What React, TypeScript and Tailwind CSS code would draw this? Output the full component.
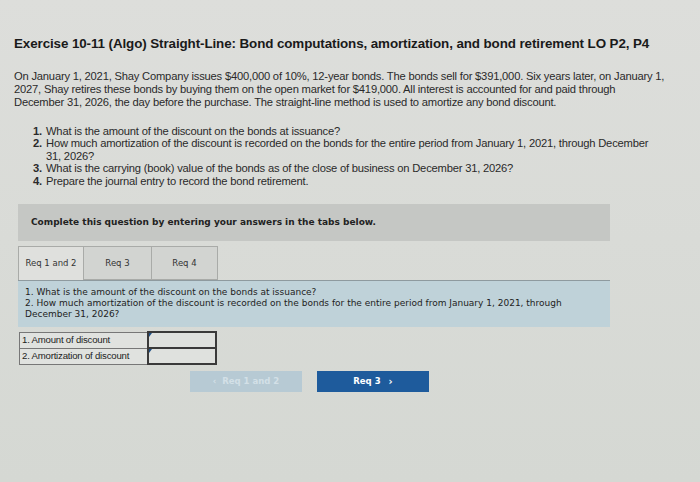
import React from 'react'

const questions = [
  { n: '1.', lines: ['What is the amount of the discount on the bonds at issuance?'] },
  {
    n: '2.',
    lines: [
      'How much amortization of the discount is recorded on the bonds for the entire period from January 1, 2021, through December',
      '31, 2026?',
    ],
  },
  { n: '3.', lines: ['What is the carrying (book) value of the bonds as of the close of business on December 31, 2026?'] },
  { n: '4.', lines: ['Prepare the journal entry to record the bond retirement.'] },
]

const tabs = [
  { label: 'Req 1 and 2', width: 'w-[66px]', active: true },
  { label: 'Req 3', width: 'w-[68px]', active: false },
  { label: 'Req 4', width: 'w-[66px]', active: false },
]

export default function App() {
  return (
    <div className="w-[700px] h-[482px] overflow-hidden bg-gradient-to-b from-[#dddedb] to-[#d5d8d3] pt-[36px] pl-[14px] pr-[10px] font-['Liberation_Sans',Arial,sans-serif] text-[#1e1e1e]">
      {/* Title */}
      <h1 className="text-[13.4px] leading-[16px] font-bold tracking-[-0.1px] text-[#1a1a1a] whitespace-nowrap">
        Exercise 10-11 (Algo) Straight-Line: Bond computations, amortization, and bond retirement LO P2, P4
      </h1>

      {/* Problem text */}
      <p className="mt-[18px] text-[11.2px] leading-[13px] tracking-[-0.2px] text-[#2a2a2a] whitespace-nowrap">
        On January 1, 2021, Shay Company issues $400,000 of 10%, 12-year bonds. The bonds sell for $391,000. Six years later, on January 1,
        <br />
        2027, Shay retires these bonds by buying them on the open market for $419,000. All interest is accounted for and paid through
        <br />
        December 31, 2026, the day before the purchase. The straight-line method is used to amortize any bond discount.
      </p>

      <ol className="mt-[16px] ml-[19px] text-[11.2px] leading-[12.4px] tracking-[-0.2px] text-[#2a2a2a] whitespace-nowrap">
        {questions.map(q => (
          <li key={q.n} className="flex">
            <span className="w-[13px] shrink-0 font-bold">{q.n}</span>
            <span>
              {q.lines.map((l, i) => (
                <span key={i} className="block">
                  {l}
                </span>
              ))}
            </span>
          </li>
        ))}
      </ol>

      <div className="ml-[4px] w-[592px] mt-[17px] font-['DejaVu_Sans',Verdana,sans-serif]">
        {/* Instruction bar */}
        <div className="h-[37px] bg-[#c5c7c4] flex items-center pl-[13px]">
          <span className="text-[9px] font-bold text-[#222]">
            Complete this question by entering your answers in the tabs below.
          </span>
        </div>

        {/* Tabs */}
        <div className="mt-[5px] flex h-[34px]">
          {tabs.map(t => (
            <div
              key={t.label}
              className={`${t.width} h-full flex items-center justify-center border border-[#a9aba8] text-[8.5px] text-[#333] ${
                t.active ? 'bg-[#dfe0dd] border-b-0' : 'bg-[#d2d4d1] border-l-0'
              }`}
            >
              {t.label}
            </div>
          ))}
        </div>

        {/* Question panel */}
        <div className="h-[47px] bg-[#bfd2d9] border-t border-[#8e9a9f] pt-[6px] pl-[7px] text-[9px] leading-[11px] text-[#222] whitespace-nowrap">
          <p>1. What is the amount of the discount on the bonds at issuance?</p>
          <p>
            2. How much amortization of the discount is recorded on the bonds for the entire period from January 1, 2021, through
            <br />
            December 31, 2026?
          </p>
        </div>

        {/* Answer table */}
        <table className="mt-[4px] ml-[1px] border-collapse font-['Liberation_Sans',Arial,sans-serif] text-[9.6px] tracking-[-0.2px] text-[#222]">
          <tbody>
            {['1. Amount of discount', '2. Amortization of discount'].map(label => (
              <tr key={label} className="h-[16px]">
                <td className="w-[128px] border border-[#777] bg-[#e0e2df] pl-[2px] leading-none whitespace-nowrap">{label}</td>
                <td className="w-[68px] border-2 border-[#3a3a3a] bg-[#dfe1de] p-0 relative">
                  <span className="absolute left-0 top-0 w-0 h-0 border-t-[4px] border-t-[#1f4f85] border-r-[3px] border-r-transparent" />
                </td>
              </tr>
            ))}
          </tbody>
        </table>

        {/* Navigation */}
        <div className="mt-[6px] ml-[172px] flex gap-[15px]">
          <button className="w-[112px] h-[21px] bg-[#b7cad4] text-[#d3e0e7] text-[8.5px] font-bold flex items-center justify-center gap-[6px]">
            <span>&lsaquo;</span>
            <span>Req 1 and 2</span>
          </button>
          <button className="w-[112px] h-[21px] bg-[#1e5b9c] text-white text-[8.5px] font-bold flex items-center justify-center gap-[8px]">
            <span>Req 3</span>
            <span className="text-[10px]">&rsaquo;</span>
          </button>
        </div>
      </div>
    </div>
  )
}
